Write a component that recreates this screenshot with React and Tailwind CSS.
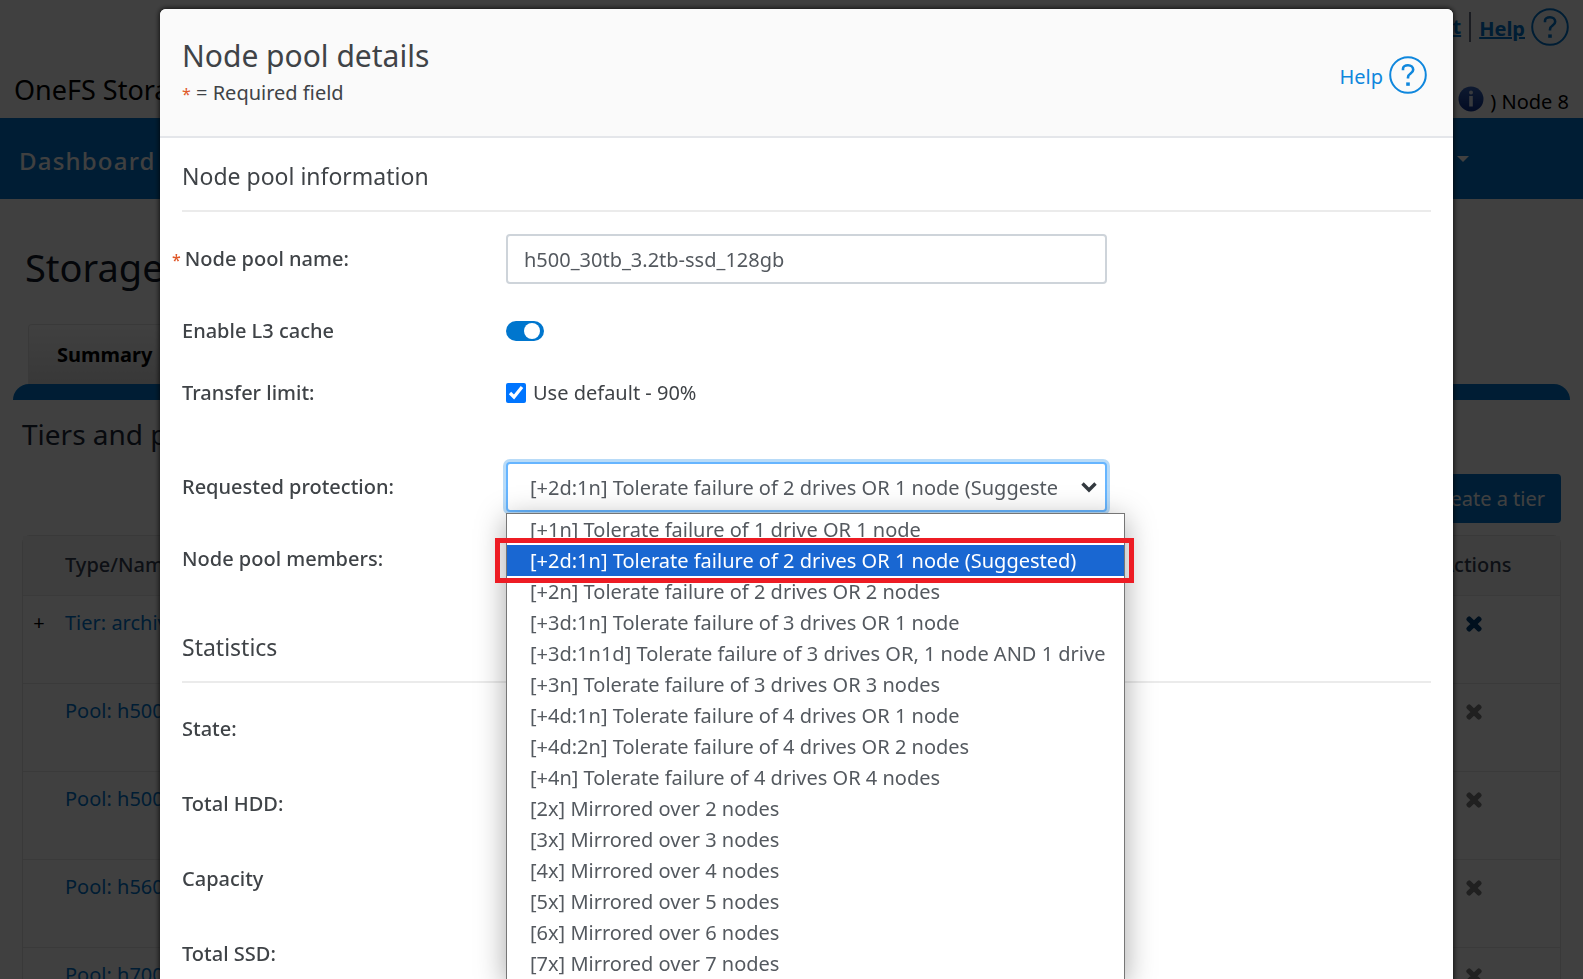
import { useState } from "react";
import { FaTimes } from "react-icons/fa";

const protectionOptions = [
    "[+1n] Tolerate failure of 1 drive OR 1 node",
    "[+2d:1n] Tolerate failure of 2 drives OR 1 node (Suggested)",
    "[+2n] Tolerate failure of 2 drives OR 2 nodes",
    "[+3d:1n] Tolerate failure of 3 drives OR 1 node",
    "[+3d:1n1d] Tolerate failure of 3 drives OR, 1 node AND 1 drive",
    "[+3n] Tolerate failure of 3 drives OR 3 nodes",
    "[+4d:1n] Tolerate failure of 4 drives OR 1 node",
    "[+4d:2n] Tolerate failure of 4 drives OR 2 nodes",
    "[+4n] Tolerate failure of 4 drives OR 4 nodes",
    "[2x] Mirrored over 2 nodes",
    "[3x] Mirrored over 3 nodes",
    "[4x] Mirrored over 4 nodes",
    "[5x] Mirrored over 5 nodes",
    "[6x] Mirrored over 6 nodes",
    "[7x] Mirrored over 7 nodes",
];

const rows = [
    { id: 1, name: "Tier: archive", tier: true },
    { id: 2, name: "Pool: h500", tier: false },
    { id: 3, name: "Pool: h500", tier: false },
    { id: 4, name: "Pool: h560", tier: false },
    { id: 5, name: "Pool: h700", tier: false },
];

function HelpIcon() {
    return (
        <svg className="size-[38px] shrink-0" viewBox="0 0 38 38" fill="none" stroke="currentColor" aria-hidden="true">
            <circle cx="19" cy="19" r="17.8" strokeWidth="2" />
            <path d="M14 14.2v-1.4c0-2 2-3.6 5-3.6s5.2 1.8 5.2 4.6c0 3.8-5.2 3.6-5.2 7.4v1.2" strokeWidth="2.6" />
            <path d="M19 26.4v3.4" strokeWidth="3.6" />
        </svg>
    );
}

function InfoIcon() {
    return (
        <svg className="size-[26px] shrink-0" viewBox="0 0 26 26" aria-hidden="true">
            <defs>
                <linearGradient id="info" x1="0" y1="0" x2="0" y2="1">
                    <stop offset="0" stopColor="#3a68c0" />
                    <stop offset="1" stopColor="#0c2f8c" />
                </linearGradient>
            </defs>
            <circle cx="13" cy="13" r="12.5" fill="url(#info)" />
            <circle cx="13" cy="6.5" r="2" fill="#dfe6f5" />
            <path d="M13 10v10.5" fill="none" stroke="#dfe6f5" strokeWidth="3.6" />
        </svg>
    );
}

function StoragePage() {
    return (
        <div className="bg-white text-black">
            {/* Top bar */}
            <header className="flex h-[118px] justify-between px-3.5">
                <h1 className="self-end whitespace-nowrap pb-2 text-[27px] leading-10">OneFS Storage Administration</h1>
                <div className="flex flex-col items-end justify-between pt-2">
                    <div className="flex items-center text-[#0076ce]">
                        <a href="#about" className="text-xl font-bold underline">About</a>
                        <span className="mx-2 h-[30px] w-0.5 bg-gray-500"></span>
                        <a href="#help" className="flex items-center gap-1.5 text-xl font-bold underline">
                            <span className="pt-1">Help</span> <HelpIcon />
                        </a>
                    </div>
                    <div className="flex gap-1.5 text-xl leading-8">
                        <InfoIcon />
                        <span>) Node 8</span>
                    </div>
                </div>
            </header>

            <nav className="flex h-[81px] items-center justify-between bg-[#0076ce] pl-[19px] pr-[114px] text-white">
                <a href="#dashboard" className="pt-1 text-2xl font-medium tracking-wider">Dashboard</a>
                <svg className="h-1.5 w-3" viewBox="0 0 12 6" aria-hidden="true">
                    <path d="M0 0h12L6 6z" fill="currentColor" />
                </svg>
            </nav>

            <main className="px-[13px]">
                <h2 className="pt-[38px] pl-3 text-[38px] leading-[60px] text-gray-900">Storage pools</h2>
                <div className="mt-[27px] ml-[15px] w-fit rounded-t border border-b-0 border-[#e4e4e4] bg-linear-to-b from-white to-[#dedede] px-7">
                    <a href="#summary" className="block text-xl leading-[59px] font-bold">Summary</a>
                </div>
                <div className="h-4 rounded-t-2xl bg-[#0076ce]"></div>

                <div className="px-[9px]">
                    <h3 className="pt-3.5 text-[28px] leading-10 text-gray-800">Tiers and pools</h3>
                    <div className="flex justify-end pt-5 pb-3">
                        <button type="button" className="h-[49px] rounded bg-[#0076ce] px-4 text-xl text-white">Create a tier</button>
                    </div>
                    <div className="rounded-lg border border-[#e2e2e2]">
                        <table className="w-full text-left text-xl">
                            <thead className="bg-[#f7f7f7]">
                                <tr className="h-[59px]">
                                    <th className="w-8"></th>
                                    <th className="pl-2.5 font-medium text-gray-700">Type/Name</th>
                                    <th className="w-[127px] pl-2 font-medium text-gray-700">Actions</th>
                                </tr>
                            </thead>
                            <tbody>
                                {rows.map((row) => (
                                    <tr key={row.id} className="h-[88px] border-t border-[#e8e8e8] align-top">
                                        <td className="pt-[11px] text-center leading-8">{row.tier ? "+" : ""}</td>
                                        <td className="pt-[11px] pl-2.5 leading-8">
                                            <a href="#pool" className="text-[#0076ce]">{row.name}</a>
                                        </td>
                                        <td className="pt-[18px] pl-[31px]">
                                            <button type="button" aria-label="Delete" className={row.tier ? "block text-[#00407a]" : "block text-[#808080]"}>
                                                <FaTimes stroke="currentColor" strokeWidth="40" />
                                            </button>
                                        </td>
                                    </tr>
                                ))}
                            </tbody>
                        </table>
                    </div>
                </div>
            </main>
        </div>
    );
}

function ProtectionSelect({ value, onChange }) {
    return (
        <div className="relative w-[601px]">
            <select
                id="protection"
                value={value}
                onChange={(e) => onChange(e.target.value)}
                className="h-[50px] w-full appearance-none rounded border-2 border-[#66b5ff] bg-white pt-0.5 pr-12 pl-[22px] text-xl text-[#54595f] ring-3 ring-[#b8dbf8] outline-none"
            >
                {protectionOptions.map((option) => (
                    <option key={option}>{option}</option>
                ))}
            </select>
            <svg className="pointer-events-none absolute top-[19px] right-2.5 h-3 w-4" viewBox="0 0 16 12" aria-hidden="true">
                <path d="M1.5 2.5L8 9l6.5-6.5" fill="none" stroke="#343a40" strokeWidth="3.4" />
            </svg>

            {/* Open option list */}
            <ul role="listbox" aria-label="Protection levels" className="absolute top-[51px] left-0 z-10 w-[619px] border border-[#767676] bg-white shadow-[0_6px_28px_rgba(0,0,0,0.35)]">
                {protectionOptions.map((option) => (
                    <li
                        key={option}
                        role="option"
                        aria-selected={option === value}
                        onClick={() => onChange(option)}
                        className={
                            option === value
                                ? "relative h-[31px] bg-[#1967d2] pl-[23px] text-xl leading-[31px] whitespace-nowrap text-white"
                                : "h-[31px] pl-[23px] text-xl leading-[31px] whitespace-nowrap text-[#54595f]"
                        }
                    >
                        {option}
                        {option === value && (
                            <span className="absolute -right-2.5 -left-3 -inset-y-[7px] border-5 border-[#ed1c24]"></span>
                        )}
                    </li>
                ))}
            </ul>
        </div>
    );
}

function NodePoolDialog() {
    const [name, setName] = useState("h500_30tb_3.2tb-ssd_128gb");
    const [l3Cache, setL3Cache] = useState(true);
    const [useDefault, setUseDefault] = useState(true);
    const [protection, setProtection] = useState(protectionOptions[1]);

    return (
        <div role="dialog" aria-labelledby="dialog-title" className="min-h-screen w-full rounded-md bg-white text-[#3f4347] shadow-[0_0_5px_1px_rgba(0,0,0,0.7)]">
            <div className="flex h-[129px] items-start justify-between rounded-t-md border-b-2 border-[#e4e6ea] bg-[#fafafa] pt-6 pr-[26px] pl-[22px]">
                <div>
                    <h2 id="dialog-title" className="text-3xl leading-[46px]">Node pool details</h2>
                    <p className="text-xl leading-7">
                        <span className="text-base text-[#e0592a]">*</span> = Required field
                    </p>
                </div>
                <a href="#help" className="mt-[23px] flex items-center gap-1.5 text-xl text-[#0f87dd]">
                    <span className="pt-1">Help</span> <HelpIcon />
                </a>
            </div>

            <form className="px-[22px]">
                <h3 className="border-b-2 border-[#ebebeb] pt-5 pb-4 text-[23px] leading-9">Node pool information</h3>

                <div className="mt-[22px] flex items-center">
                    <label htmlFor="pool-name" className="-ml-2.5 w-[334px] text-xl font-medium">
                        <span className="pr-1 text-base text-[#e0592a]">*</span>
                        Node pool name:
                    </label>
                    <input
                        id="pool-name"
                        type="text"
                        value={name}
                        onChange={(e) => setName(e.target.value)}
                        className="h-[50px] w-[601px] rounded border-2 border-[#ced4da] px-4 text-xl text-[#54595f]"
                    />
                </div>

                <div className="mt-[31px] flex h-8 items-center">
                    <label htmlFor="l3-cache" className="w-[324px] text-xl font-medium">Enable L3 cache</label>
                    <input
                        id="l3-cache"
                        type="checkbox"
                        role="switch"
                        checked={l3Cache}
                        onChange={() => setL3Cache(!l3Cache)}
                        className="flex h-5 w-[38px] appearance-none items-center rounded-full bg-gray-400 px-1 before:size-4 before:rounded-full before:bg-white checked:justify-end checked:bg-[#0076ce]"
                    />
                </div>

                <div className="mt-[30px] flex h-8 items-center">
                    <span className="w-[324px] text-xl font-medium">Transfer limit:</span>
                    <input
                        id="use-default"
                        type="checkbox"
                        checked={useDefault}
                        onChange={() => setUseDefault(!useDefault)}
                        className="size-5 accent-[#0075ff]"
                    />
                    <label htmlFor="use-default" className="pl-[7px] text-xl">Use default - 90%</label>
                </div>

                <div className="mt-[53px] flex items-center">
                    <label htmlFor="protection" className="w-[324px] text-xl font-medium">Requested protection:</label>
                    <ProtectionSelect value={protection} onChange={setProtection} />
                </div>

                <p className="mt-[31px] text-xl leading-8 font-medium">Node pool members:</p>

                <h3 className="mt-[54px] border-b-2 border-[#ebebeb] pb-4 text-[23px] leading-9">Statistics</h3>

                <dl className="mt-[30px] flex flex-col gap-[43px] text-xl leading-8 font-medium">
                    <dt>State:</dt>
                    <dt>Total HDD:</dt>
                    <dt>Capacity</dt>
                    <dt>Total SSD:</dt>
                </dl>
            </form>
        </div>
    );
}

function App() {
    return (
        <div className="relative h-screen overflow-hidden font-['Noto_Sans','Open_Sans',sans-serif]">
            <StoragePage />
            <div className="fixed inset-0 overflow-hidden bg-black/75 pt-[9px] pr-[130px] pl-40">
                <NodePoolDialog />
            </div>
        </div>
    );
}

export default App;
